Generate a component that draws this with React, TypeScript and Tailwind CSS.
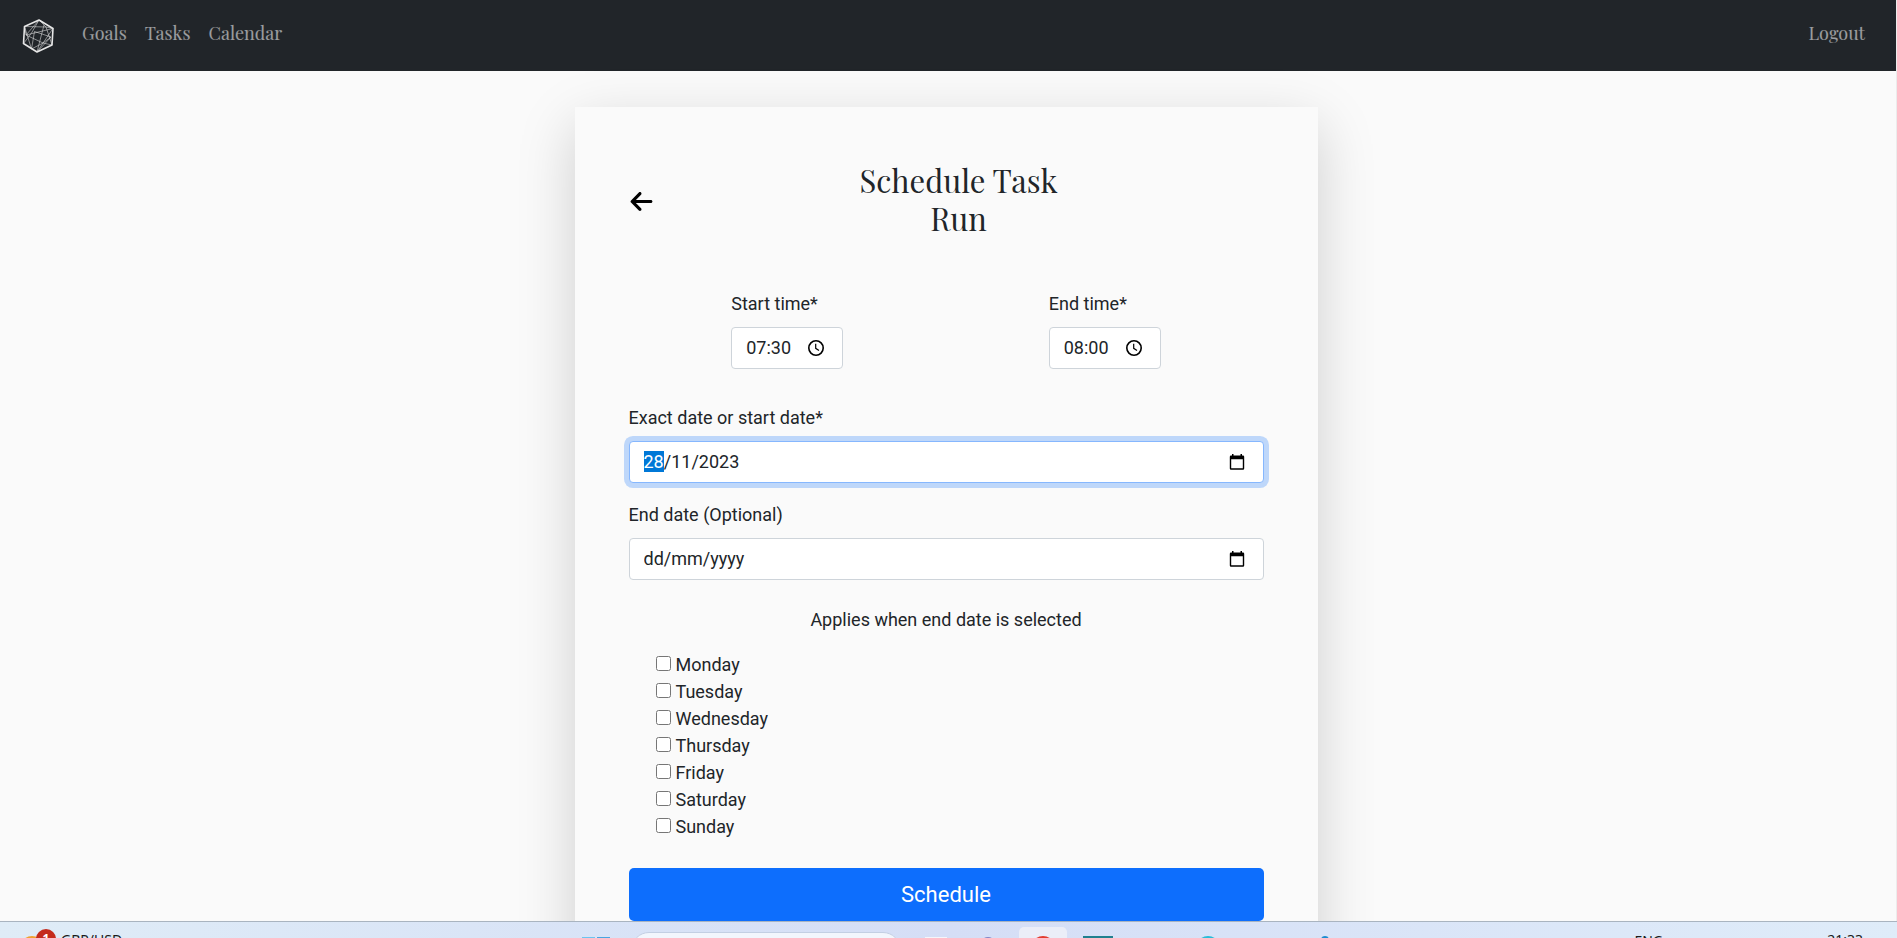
import { useEffect, useRef, useState } from "react";
import type { ReactNode } from "react";
import { FaArrowLeft } from "react-icons/fa6";

const DAYS = ["Monday", "Tuesday", "Wednesday", "Thursday", "Friday", "Saturday", "Sunday"];

function Logo() {
  return (
    <svg viewBox="0 0 32 34" className="h-[34px] w-8" fill="none" stroke="#e6e6e6" aria-hidden="true">
      <path d="M17 1 31 9.500 30 26 15 33 1.500 24.500 2.500 7.500Z" strokeWidth="1.600" strokeLinejoin="round" />
      <path
        d="M17 1 9.500 14 1.500 24.500M17 1 24 8 30 26M2.500 7.500 24 8 31 9.500 4 16 2.500 7.500 9.500 30 12.500 12.500 29 18 21 24 15 33 29 18M31 9.500 21 24 4 16M21 24 30 26M9.500 30 21 24M22 6 15 33M17 1 4 16"
        strokeWidth="0.900"
        opacity="0.6"
      />
    </svg>
  );
}

function ClockIcon() {
  return (
    <svg viewBox="0 0 16 16" className="size-4" fill="none" stroke="black" aria-hidden="true">
      <circle cx="8" cy="8" r="7.200" strokeWidth="1.600" />
      <path d="M7.700 3.800V8.300L11 10.400" strokeWidth="1.200" />
    </svg>
  );
}

function CalendarIcon() {
  return (
    <svg viewBox="0 0 16 16" className="size-4" aria-hidden="true">
      <path
        fillRule="evenodd"
        d="M3 0h1.500v1.500h7V0H13v1.500h1a1.200 1.200 0 0 1 1.200 1.200V14.500a1.200 1.200 0 0 1-1.200 1.200H2A1.200 1.200 0 0 1 .8 14.500V2.700A1.200 1.200 0 0 1 2 1.500h1ZM2.200 5.300v9h11.600v-9Z"
      />
    </svg>
  );
}

type PickerProps = {
  id: string;
  label: string;
  initial: string;
  placeholder?: string;
  focused?: boolean;
  icon: ReactNode;
};

function PickerField({ id, label, initial, placeholder, focused, icon }: PickerProps) {
  const [value, setValue] = useState(initial);
  const ref = useRef<HTMLInputElement>(null);

  useEffect(() => {
    if (focused && ref.current) {
      ref.current.focus({ preventScroll: true });
      ref.current.setSelectionRange(0, 2);
    }
  }, [focused]);

  return (
    <div className="flex flex-col gap-[10px]">
      <label htmlFor={id}>{label}</label>
      <div className="flex h-[42px] items-center rounded-[4px] border border-[#ced4da] bg-white pr-[18px] pl-[14px] focus-within:border-[#86b7fe] focus-within:ring-[5px] focus-within:ring-[#0d6efd]/25">
        <input
          id={id}
          ref={ref}
          type="text"
          value={value}
          placeholder={placeholder}
          onChange={(e) => setValue(e.target.value)}
          className="h-6 w-full min-w-0 bg-transparent pb-[2px] leading-[22px] outline-none selection:bg-[#0078d7] selection:text-white placeholder:text-[#212529]"
        />
        <button type="button" aria-label={`Pick ${label}`}>
          {icon}
        </button>
      </div>
    </div>
  );
}

function Navbar() {
  return (
    <nav className="flex h-[71px] shrink-0 items-center bg-[#212529] pr-[31px] pl-[22px] font-['Playfair_Display','Liberation_Serif',serif] text-[18px] text-white/55">
      <a href="#home" aria-label="Home">
        <Logo />
      </a>
      <div className="ml-7 flex gap-[18px] pb-[5px]">
        <a href="#goals">Goals</a>
        <a href="#tasks">Tasks</a>
        <a href="#calendar">Calendar</a>
      </div>
      <a href="#logout" className="ml-auto pb-[5px]">
        Logout
      </a>
    </nav>
  );
}

function Taskbar() {
  return (
    <footer className="relative h-[17px] shrink-0 overflow-hidden border-t border-[#a9b4c0] bg-linear-to-r from-[#dfecf7] via-[#d5def6] to-[#dfecf9] font-['Noto_Sans',sans-serif] text-[14px] leading-5 text-[#1b1b1b]">
      <span className="absolute top-[14px] left-5 h-6 w-6 rounded-full bg-[#f0a030]" />
      <span className="absolute top-[7px] left-9 h-5 w-5 rounded-full bg-[#c42b1c] text-center text-[12px] leading-5 font-bold text-white">
        1
      </span>
      <span className="absolute top-2 left-[61px]">GBP/USD</span>
      <span className="absolute top-[15px] left-[582px] h-3 w-[13px] bg-[#6cc4f0]" />
      <span className="absolute top-[15px] left-[597px] h-3 w-[13px] bg-[#4aa5e0]" />
      <span className="absolute top-[10px] left-[631px] h-9 w-[270px] rounded-full border border-[#c3cfe3] bg-[#f2f6fd]" />
      <span className="absolute top-[15px] left-[925px] h-3 w-[22px] bg-[#f4f6fb]" />
      <span className="absolute top-[15px] left-[980px] h-4 w-4 rounded-full bg-[#8284c4]" />
      <span className="absolute top-[5px] left-[1019px] h-10 w-12 rounded-[5px] bg-[#ebeef8]" />
      <span className="absolute top-[14px] left-[1031px] h-6 w-6 rounded-full bg-[#e23c30]" />
      <span className="absolute top-[14px] left-[1083px] h-6 w-[30px] bg-[#20808f]" />
      <span className="absolute top-[14px] left-[1196px] h-6 w-6 rounded-full bg-[#28bcd8]" />
      <span className="absolute top-[14px] left-[1321px] h-3 w-2 rounded-full bg-[#1c8cd0]" />
      <span className="absolute top-[9px] right-[234px]">ENG</span>
      <span className="absolute top-2 right-[34px]">21:33</span>
    </footer>
  );
}

export default function App() {
  return (
    <div className="flex h-screen flex-col overflow-hidden bg-[#fafafa] font-[Roboto,sans-serif] text-[18px] leading-[27px] text-[#212529]">
      <div className="flex min-h-0 flex-1 flex-col overflow-hidden border-r border-[#ececec]">
        <Navbar />
        <main className="pt-9 pr-5 pl-4">
          <form
            onSubmit={(e) => e.preventDefault()}
            className="mx-auto max-w-[743px] bg-[#fafafa] p-[54px] shadow-[0_18px_54px_rgba(0,0,0,0.175)]"
          >
            <header className="flex items-center">
              <a href="#back" aria-label="Back" className="pt-1 text-black">
                <FaArrowLeft size={25} />
              </a>
              <div className="flex flex-1 justify-center">
                <h1 className="w-60 text-center font-['Playfair_Display','Liberation_Serif',serif] text-[31px] leading-[38px]">
                  Schedule Task Run
                </h1>
              </div>
            </header>

            <div className="mt-[53px] grid grid-cols-2 justify-items-center">
              <div className="w-28">
                <PickerField id="start-time" label="Start time*" initial="07:30" icon={<ClockIcon />} />
              </div>
              <div className="w-28">
                <PickerField id="end-time" label="End time*" initial="08:00" icon={<ClockIcon />} />
              </div>
            </div>

            <div className="mt-[35px] flex flex-col gap-[18px]">
              <PickerField id="start-date" label="Exact date or start date*" initial="28/11/2023" focused icon={<CalendarIcon />} />
              <PickerField id="end-date" label="End date (Optional)" initial="" placeholder="dd/mm/yyyy" icon={<CalendarIcon />} />
            </div>

            <p className="mt-[26px] text-center">Applies when end date is selected</p>

            <ul className="mt-[18px] pl-[27px]">
              {DAYS.map((day) => (
                <li key={day}>
                  <label className="flex w-fit items-center gap-[5px]">
                    <input type="checkbox" className="mb-[2px] size-[15px]" />
                    {day}
                  </label>
                </li>
              ))}
            </ul>

            <button type="submit" className="mt-7 h-[53px] w-full rounded-[5px] bg-[#0d6efd] text-[22px] text-white">
              Schedule
            </button>
          </form>
        </main>
      </div>
      <Taskbar />
    </div>
  );
}
